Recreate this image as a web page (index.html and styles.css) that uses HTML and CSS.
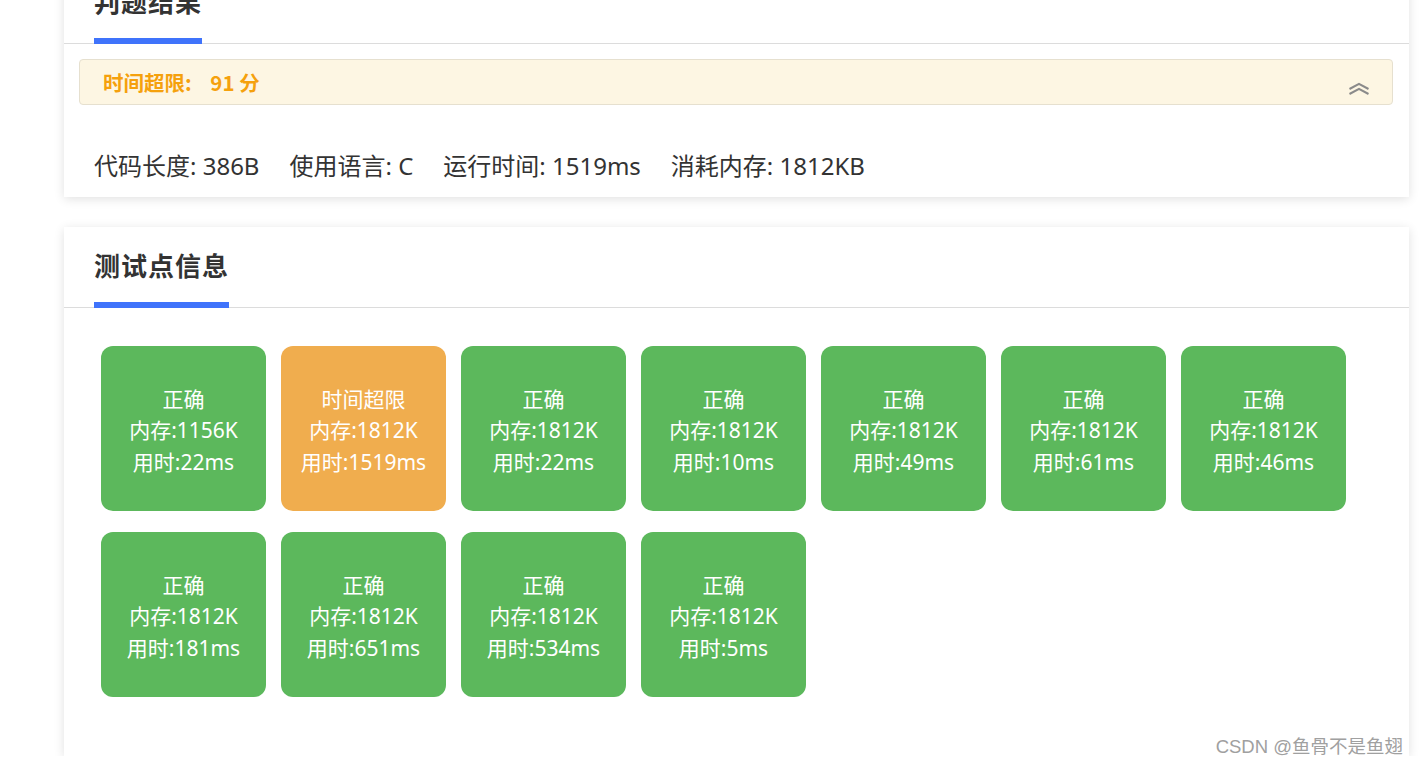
FILE: index.html
```html
<!DOCTYPE html>
<html lang="zh">
<head>
<meta charset="utf-8">
<title>判题结果</title>
<link rel="stylesheet" href="styles.css">
</head>
<body>
<div class="page">
  <section class="card card-result">
    <div class="card-head"><h2 class="card-title">判题结果</h2></div>
    <div class="result-body">
      <div class="alert">
        <span class="alert-text">时间超限: <span class="score">91 分</span></span>
        <svg class="chev" width="22" height="14" viewBox="0 0 22 14" aria-hidden="true">
          <polyline points="1.5,7 11,1.8 20.5,7" fill="none" stroke="#8a8a8a" stroke-width="2"/>
          <polyline points="1.5,12 11,6.8 20.5,12" fill="none" stroke="#8a8a8a" stroke-width="2"/>
        </svg>
      </div>
      <div class="stats">
        <span>代码长度: 386B</span>
        <span>使用语言: C</span>
        <span>运行时间: 1519ms</span>
        <span>消耗内存: 1812KB</span>
      </div>
    </div>
  </section>

  <section class="card card-tests">
    <div class="card-head"><h2 class="card-title">测试点信息</h2></div>
    <div class="tests">
      <div class="case ok"><span>正确</span><span>内存:1156K</span><span>用时:22ms</span></div>
      <div class="case tle"><span>时间超限</span><span>内存:1812K</span><span>用时:1519ms</span></div>
      <div class="case ok"><span>正确</span><span>内存:1812K</span><span>用时:22ms</span></div>
      <div class="case ok"><span>正确</span><span>内存:1812K</span><span>用时:10ms</span></div>
      <div class="case ok"><span>正确</span><span>内存:1812K</span><span>用时:49ms</span></div>
      <div class="case ok"><span>正确</span><span>内存:1812K</span><span>用时:61ms</span></div>
      <div class="case ok"><span>正确</span><span>内存:1812K</span><span>用时:46ms</span></div>
      <div class="case ok"><span>正确</span><span>内存:1812K</span><span>用时:181ms</span></div>
      <div class="case ok"><span>正确</span><span>内存:1812K</span><span>用时:651ms</span></div>
      <div class="case ok"><span>正确</span><span>内存:1812K</span><span>用时:534ms</span></div>
      <div class="case ok"><span>正确</span><span>内存:1812K</span><span>用时:5ms</span></div>
    </div>
    <div class="watermark">CSDN @鱼骨不是鱼翅</div>
  </section>
</div>
</body>
</html>
```

FILE: styles.css
```css
html, body {
  margin: 0;
  padding: 0;
  background: #fff;
  overflow: hidden;
}
body {
  font-family: "Noto Sans", "Noto Sans CJK SC", sans-serif;
  color: #333;
}
.page {
  display: flex;
  flex-direction: column;
  gap: 30px;
  padding: 0 10px 0 64px;
  margin-top: -37px;
}
.card {
  background: #fff;
  box-shadow: 0 2px 10px rgba(0, 0, 0, 0.12);
  position: relative;
}
.card-head {
  padding-left: 30px;
  border-bottom: 1px solid #dcdcdc;
  height: 81px;
  box-sizing: border-box;
  display: flex;
  align-items: flex-end;
}
.card-title {
  margin: 0 0 -1px 0;
  font-family: "Noto Sans CJK SC", sans-serif;
  font-size: 26px;
  font-weight: 700;
  line-height: 40px;
  color: #333;
  padding-bottom: 17px;
  border-bottom: 6px solid #3f73fb;
  letter-spacing: 1px;
}
.result-body {
  padding: 15px 16px 13px 15px;
}
.alert {
  height: 46px;
  box-sizing: border-box;
  border: 1px solid #e6e0cf;
  border-radius: 4px;
  background: #fdf6e3;
  display: flex;
  align-items: center;
  justify-content: space-between;
  padding: 0 22px 0 23px;
}
.alert-text {
  font-family: "Noto Sans CJK SC", sans-serif;
  font-size: 20.5px;
  font-weight: 700;
  color: #f5a10d;
  white-space: pre;
}
.score {
  margin-left: 14px;
}
.chev {
  margin-top: 14px;
}
.stats {
  margin-top: 43px;
  padding-left: 15px;
  display: flex;
  gap: 30px;
  font-size: 24px;
  line-height: 36px;
  color: #333;
}
.tests {
  padding: 38px 37px 59px 37px;
  display: grid;
  grid-template-columns: repeat(auto-fill, 165px);
  gap: 21px 15px;
}
.case {
  width: 165px;
  height: 165px;
  border-radius: 12px;
  color: #fff;
  display: flex;
  flex-direction: column;
  align-items: center;
  justify-content: center;
  font-size: 21px;
  line-height: 31.5px;
  padding-top: 5px;
  box-sizing: border-box;
}
.case.ok { background: #5cb85c; }
.case.tle { background: #f0ad4e; }
.watermark {
  position: absolute;
  right: 6px;
  bottom: -2px;
  font-family: "Liberation Sans", "Noto Sans CJK SC", sans-serif;
  font-size: 18.5px;
  line-height: 22px;
  color: #a0a0a0;
}
```
